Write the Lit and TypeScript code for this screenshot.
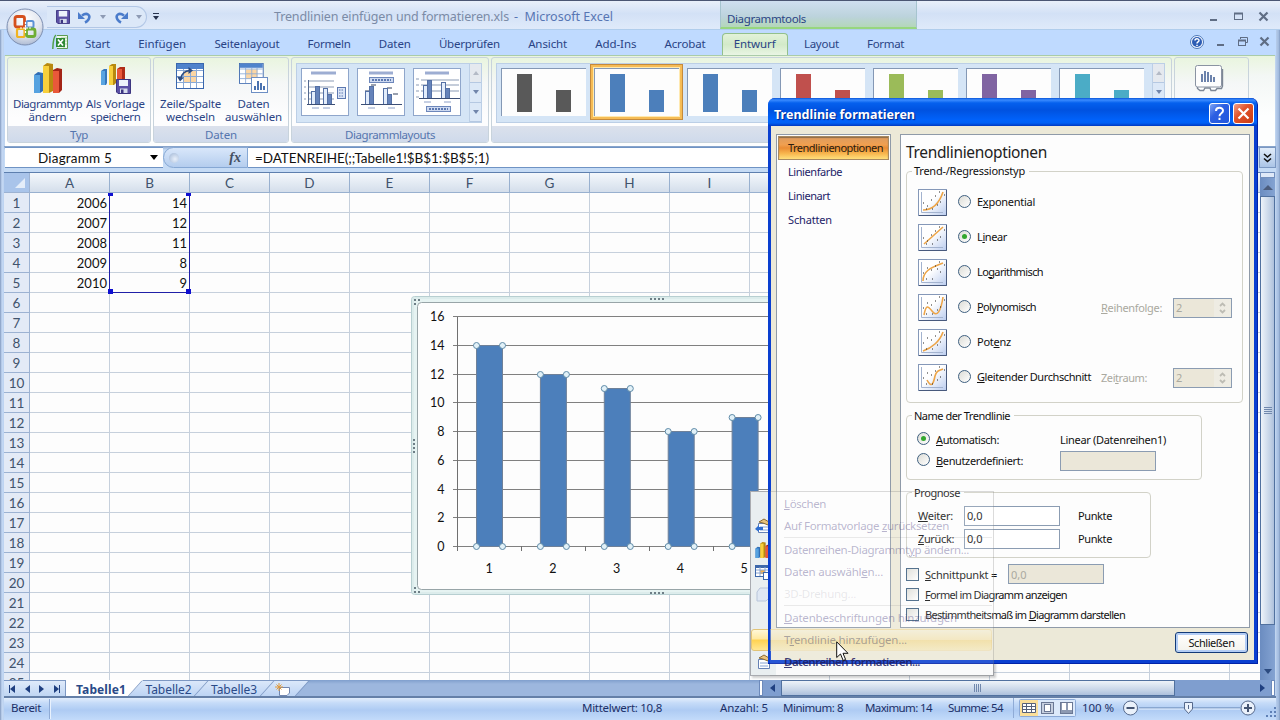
import { LitElement, html, css, svg, nothing } from "lit";
import { customElement, property } from "lit/decorators.js";
import { classMap } from "lit/directives/class-map.js";

/** One line of text tracked to a given width; "_" marks the accelerator letter. */
@customElement("fit-label")
class FitLabel extends LitElement {
  @property() text = "";
  @property({ type: Number }) w = 0;
  static styles = css`
    :host { display: inline-block; white-space: pre; flex: none; justify-self: start; }
    u { text-underline-offset: 1px; text-decoration-thickness: 1px; }
  `;
  firstUpdated() {
    if (!this.w) return;
    const natural = this.renderRoot.querySelector("span")!.getBoundingClientRect().width;
    const n = this.text.replace("_", "").length;
    this.style.letterSpacing = `${(this.w + 1 - natural) / n}px`;
  }
  render() {
    const i = this.text.indexOf("_");
    if (i < 0) return html`<span>${this.text}</span>`;
    return html`<span>${this.text.slice(0, i)}<u>${this.text[i + 1]}</u>${this.text.slice(i + 2)}</span>`;
  }
}

const fit = (text: string, w: number, cls = "") =>
  html`<fit-label class=${cls} .text=${text} .w=${w}></fit-label>`;

/* ---------- icons ---------- */
const barsIcon = (size: number) => html`<svg width=${size} height=${size} viewBox="0 0 30 30">
  <path d="M1 12 5 9 10 10V28L7 30H1Z" fill="#2f6db5"/><path d="M1 12H7V30H1Z" fill="#56a2e0"/>
  <path d="M10 3 14 0 20 1V28L16 30H10Z" fill="#b88a10"/><path d="M10 3H16V30H10Z" fill="#f7cf3c"/>
  <path d="M20 7 24 5 29 6V27L26 30H20Z" fill="#a32416"/><path d="M20 8H26V30H20Z" fill="#e9583a"/></svg>`;

const floppy = svg`<path d="M.5 .5H14.5V14.5H2L.5 13Z" fill="#5b50a5" stroke="#3c3580"/>
  <path d="M3 1H12V7H3Z" fill="#eef3fb"/><path d="M4 9.5H11.5V14H4Z" fill="#d6dcec"/><path d="M5 10.5H7.5V14H5Z" fill="#3c3580"/>`;

const templateIcon = html`<svg width="32" height="32" viewBox="0 0 32 32">
  <path d="M1 8 4 6H7V20L6 22H1Z" fill="#3577bd"/><path d="M1 8H5V22H1Z" fill="#59a5e2"/>
  <path d="M9 3 12 1H16V20L14 22H9Z" fill="#b88a10"/><path d="M9 3H13V22H9Z" fill="#f7cf3c"/>
  <path d="M17 6 20 4H25V22H17Z" fill="#b02c18"/><path d="M17 6H22V22H17Z" fill="#e9583a"/>
  <g transform="translate(16 16)">${floppy}</g></svg>`;

const tableSvg = svg`<rect x=".5" y=".5" width="27" height="25" fill="#fff" stroke="#3a67ae"/>
  <rect x="1" y="1" width="26" height="5" fill="#4f83cc"/><rect x="8" y="8" width="13" height="12" fill="#fbd6a4"/>
  <path d="M1 7.500H27M1 13.500H27M1 19.500H27M7.500 6V25M14.500 6V25M20.500 6V25" stroke="#8aaad6" fill="none"/>`;

const swapIcon = html`<svg width="30" height="28" viewBox="0 0 30 28">${tableSvg}
  <path d="M4.500 16C5.500 11 8 8 14 7.500" fill="none" stroke="#2c4b80" stroke-width="1.700"/>
  <path d="M1 13.500 4 18.500 8 14.500Z M12.500 4 17 7.500 12.500 11Z" fill="#2c4b80"/></svg>`;

const selectIcon = html`<svg width="30" height="31" viewBox="0 0 30 31"><g transform="scale(.88 .8)">${tableSvg}</g>
  <rect x="12.500" y="14.500" width="16" height="15" fill="#fff" stroke="#6d8fc4"/>
  <path d="M16 27V23M19 27V18M22 27V20M25 27V23" stroke="#4a72b0" stroke-width="2"/></svg>`;

const officeLogo = html`<svg class="orb" width="38" height="38" viewBox="0 0 38 38">
  <defs><radialGradient id="orb" cx=".5" cy=".3" r=".75"><stop offset="0" stop-color="#fff"/>
  <stop offset=".6" stop-color="#e1e5ee"/><stop offset="1" stop-color="#a5b4cf"/></radialGradient></defs>
  <circle cx="19" cy="19" r="18" fill="url(#orb)" stroke="#7d8fb2"/>
  <g fill="none" stroke-linejoin="round"><rect x="9" y="8.500" width="9.500" height="10.500" rx="2" stroke="#d5501d" stroke-width="2.800"/>
  <rect x="20.500" y="13" width="7" height="6.500" rx="1.500" stroke="#5c92d6" stroke-width="2"/>
  <rect x="11" y="21" width="7.500" height="8" rx="1.500" stroke="#f1b321" stroke-width="2.200"/>
  <rect x="20.500" y="21" width="8.500" height="7.500" rx="2" stroke="#6fae35" stroke-width="2.800"/></g>
  <path d="M14 20H26M19.500 14V26" stroke="#fff" stroke-width="1.200" stroke-dasharray="2 1"/></svg>`;

const undo = (flip: boolean) => html`<svg class=${flip ? "flip" : ""} width="14" height="14" viewBox="0 0 14 14">
  <path d="M4 5.500C9 2 13 5 10.500 9.500 9.500 11 8 12 7 12.500" fill="none" stroke="#4b7ccb" stroke-width="2.600"/>
  <path d="M0 2V9H7Z" fill="#4b7ccb"/></svg>`;

const tri = (cls = "") => html`<i class="tri ${cls}"></i>`;

const excelIcon = html`<svg width="16" height="16" viewBox="0 0 16 16">
  <path d="M5 1.500H15.500V14.500H5" fill="#eff8ec" stroke="#5d9a54"/><path d="M12 4V14M9 4H15M9 7H15M9 10H15" stroke="#a9cfa0" fill="none"/>
  <path d="M4 1C1 3 1 11 .8 15" stroke="#52a04a" fill="none" stroke-width="1.500"/>
  <rect x="4" y="4" width="9" height="9" fill="#2f8a34"/><path d="M6 5.500 11 11.500M11 5.500 6 11.500" stroke="#fff" stroke-width="1.700"/></svg>`;

const winBtn = (kind: string) => html`<svg width="11" height="11" viewBox="0 0 11 11" fill="none" stroke="#5f6d84">
  ${kind === "min" ? svg`<path d="M2 9H9" stroke-width="2"/>` : nothing}
  ${kind === "max" ? svg`<rect x="1.500" y="2.500" width="8" height="6"/><path d="M1 2.500H10" stroke-width="2"/>` : nothing}
  ${kind === "res" ? svg`<path d="M3.500 3V1.500H10.500V6.500H9M3 1.500H10"/><rect x="1.500" y="4.500" width="7" height="5"/><path d="M1 4.500H9" stroke-width="2"/>` : nothing}
  ${kind === "x" ? svg`<path d="M1.500 1.500 9.500 9.500M9.500 1.500 1.500 9.500" stroke-width="2.200"/>` : nothing}</svg>`;

const layoutThumb = (kind: number) => {
  const y = [36, 36, 30][kind];
  const x = [7, 5, 7][kind];
  return html`<svg class="lthumb" width="48" height="48" viewBox="0 0 48 48">
    <rect x=".5" y=".5" width="47" height="47" fill="#fff" stroke="#8fa6cb"/>
    <path d="M${kind === 0 ? 10 : 12} 5H${kind === 0 ? 35 : 36}" stroke="#9dadd2" stroke-width="3"/>
    ${kind === 0 ? svg`<path d="M7 13H33M7 19H33M7 25H33M7 31H33" stroke="#8b9bb5"/><path d="M7.500 12V37" stroke="#556a90"/>
      <path d="M3 13H5M3 19H5M3 25H5M3 31H5" stroke="#8b9bb5"/>
      <rect x="36.500" y="19.500" width="8" height="11" fill="#dbe5f6" stroke="#5c78b0"/><path d="M38 22H43M38 25H43M38 28H43" stroke="#5c78b0" stroke-dasharray="1.500 1"/>` : nothing}
    ${kind === 1 ? svg`<rect x="12.500" y="9.500" width="24" height="5" fill="#cdd9f0" stroke="#6d87bb"/><path d="M15 12H34" stroke="#5c78b0" stroke-width="2" stroke-dasharray="2 1"/>
      <path d="M8 23H13M14 17H19M30 20H35M36 26H41" stroke="#34435f"/>` : nothing}
    ${kind === 2 ? svg`<path d="M8 12H46M8 17H46M8 23H46" stroke="#8b9bb5"/><path d="M3 11H6M3 17H6M3 23H6M3 29H6" stroke="#8b9bb5"/>
      <rect x="13.500" y="38.500" width="24" height="5" fill="#cdd9f0" stroke="#6d87bb"/><path d="M16 41H35" stroke="#5c78b0" stroke-width="2" stroke-dasharray="2 1"/>` : nothing}
    <g stroke="#5470a5"><rect x=${x + 3.5} y=${y - 12.5} width="4" height="13" fill="#e3edfb"/>
    <rect x=${x + 7.5} y=${y - 17.5} width="4" height="18" fill="#6583ba"/>
    <rect x=${x + 15.5 + (kind ? 6 : 0)} y=${y - 15.5} width="4" height="16" fill="#e3edfb"/>
    <rect x=${x + 19.5 + (kind ? 6 : 0)} y=${y - 9.5} width="4" height="10" fill="#6583ba"/></g>
    <path d="M${x - 1} ${y + .5}H${x + (kind ? 40 : 27)}" stroke="#3c4f76"/>
    <path d="M11 ${y + 4}H18M${kind ? 31 : 22} ${y + 4}H${kind ? 38 : 29}" stroke="#8da0c8"/></svg>`;
};

const helpBall = html`<svg width="14" height="14" viewBox="0 0 14 14"><circle cx="7" cy="7" r="6.500" fill="#f4f8ff" stroke="#4d78b8"/>
  <circle cx="7" cy="7" r="5" fill="#2c5cb4"/><path d="M5 5.600C5 3.300 9 3.300 9 5.500 9 7 7 6.900 7 8.600M7 9.700V11" stroke="#fff" stroke-width="1.500" fill="none"/></svg>`;

const trendPaths = [
  "M5 21C14 21 21 15 25 3", "M6 20 25 3", "M5 22C5 13 11 9 25 4",
  "M6 21C8 10 10 12 14 17 19 24 23 17 25 3", "M5 22C14 19 22 12 25 3", "M9 16C14 26 16 17 17 12 19 6 21 7 25 5",
];
const trendIcon = (k: number) => html`<svg width="29" height="27" viewBox="0 0 29 27">
  <defs><linearGradient id="tg" x1="0" y1="0" x2="1" y2="1"><stop offset=".45" stop-color="#fff"/><stop offset="1" stop-color="#b9cbee"/></linearGradient></defs>
  <rect x=".5" y=".5" width="28" height="26" fill="url(#tg)" stroke="#8598b8"/><path d="M1 26.500H28.500V1" fill="none" stroke="#48597c"/>
  <path d="M3.500 3V23.500H25" fill="none" stroke="#a3b3cf"/><path d=${trendPaths[k]} fill="none" stroke="#eda548" stroke-width="1.600"/>
  <path d="M5 14h1M9 ${k < 2 ? 17 : 9}h1M13 11h1M14 20h1M19 ${k === 2 ? 10 : 16}h1M17 7h1M22 13h1M21 3h1M26 6h1M8 20h1" stroke="#222" stroke-width="1.200"/></svg>`;

const menuIcon = (k: string) => {
  if (k === "bars") return barsIcon(16);
  const sheet = svg`<path d="M3.500 5.500H14.500V14.500H3.500Z" fill="#fff" stroke="#6681b4"/><path d="M5 9H13M5 12H13" stroke="#86a2d3"/>
      <path d="M4 4 9 1 14 4 13 7 8 5Z" fill="#e7c27c" stroke="#8a6a32"/>`;
  return html`<svg width="16" height="16" viewBox="0 0 16 16">
    ${k === "reset" ? svg`${sheet}<path d="M0 11 4 7V9H8V12H4V14Z" fill="#2f6ed0"/>` : nothing}
    ${k === "format" ? sheet : nothing}
    ${k === "table" ? svg`<rect x=".5" y="1.500" width="14" height="11" fill="#fff" stroke="#3d68ab"/><path d="M0 3H15" stroke="#3d68ab" stroke-width="2"/>
      <path d="M5 6H10V10H5Z" fill="#f2b04e"/><path d="M1 6H14M1 9H14M5 3V12M10 3V12" stroke="#8aa5d0"/><rect x="8.500" y="8.500" width="7" height="7" fill="#fff" stroke="#3d68ab"/>` : nothing}
    ${k === "cube" ? svg`<path d="M2 6 5 2H14V12L11 15H2Z" fill="#dfe7f3" stroke="#b8c5da"/>` : nothing}</svg>`;
};

/* ---------- data ---------- */
const tabs: [string, number][] = [["Start", 24], ["Einfügen", 47], ["Seitenlayout", 64], ["Formeln", 42], ["Daten", 31],
  ["Überprüfen", 60], ["Ansicht", 38], ["Add-Ins", 40], ["Acrobat", 40], ["Entwurf", 41], ["Layout", 34], ["Format", 36]];
const cols = [..."ABCDEFGHIJKLMNO", ""];
const cells = [["2006", "14"], ["2007", "12"], ["2008", "11"], ["2009", "8"], ["2010", "9"]];
const styleColors = ["#595959", "#4c7fbb", "#4c7fbb", "#c0504d", "#9bbb59", "#8064a2", "#4bacc6"];
const trends: [string, number][] = [["E_xponential", 57], ["L_inear", 29], ["Lo_garithmisch", 65], ["_Polynomisch", 58], ["Pot_enz", 33], ["_Gleitender Durchschnitt", 113]];
const menu: ([string, number, string] | null)[] = [["_Löschen", 41, ""], ["Auf Formatvorlage _zurücksetzen", 164, "reset"], null,
  ["Datenreihen-Diagrammt_yp ändern...", 184, "bars"], ["Daten auswähl_en...", 98, "table"], ["3D-Drehung...", 71, "cube"], null,
  ["_Datenbeschriftungen hinzufügen", 172, ""], ["T_rendlinie hinzufügen...", 122, ""], ["_Datenreihen formatieren...", 135, "format"]];

@customElement("excel-chart")
class ExcelChart extends LitElement {
  static styles = css`
    :host { display: block; }
    svg { display: block; }
    text { font: 12.500px Lato, "Liberation Sans", sans-serif; fill: #111; }
    .v { text-anchor: end; } .c { text-anchor: middle; }
  `;
  render() {
    const vals = [14, 12, 11, 8, 9];
    const y = (v: number) => Math.round(546 - v * 14.36) + 0.5;
    const bx = (i: number) => 476.5 + i * 63.9;
    const dots = (x: number, yy: number, vert = false) => [0, 1, 2, 3].map((i) =>
      svg`<rect x=${vert ? x : x + i * 4} y=${vert ? yy + i * 4 : yy} width="2" height="2" fill="#6d7e86"/>`);
    return html`<svg width="492" height="300" viewBox="411 296 492 300">
      <rect x="411.500" y="296.500" width="491" height="298" rx="3" fill="#e6f3f2" stroke="#b7cfd1"/>
      <rect x="413" y="298" width="488" height="295" rx="2" fill="none" stroke="#d2e5e5"/>
      <rect x="417.500" y="302.500" width="479" height="287" rx="4" fill="#fdfdfd" stroke="#98a5a8"/>
      ${dots(650, 298)}${dots(650, 592)}${dots(413, 439, true)}
      <path d="M414 300h2m2 0h2M414 304h2M414 588h2M414 592h2m2 0h2" stroke="#6d7e86" stroke-width="2"/>
      ${[0, 2, 4, 6, 8, 10, 12, 14, 16].map((v) => svg`<path d="M453 ${y(v)}H890" stroke="#808080"/>
        <text class="v" x="444.500" y=${y(v) + 4.5}>${v}</text>`)}
      <path d="M457.500 317V551${[1, 2, 3, 4, 5].map((i) => `M${Math.round(457 + i * 63.9) + 0.5} 546V551`).join("")}" stroke="#707070"/>
      ${vals.map((v, i) => svg`<rect x=${bx(i)} y=${y(v)} width="26" height=${y(0) - y(v)} fill="#4c7fbb" stroke="#6f8199"/>
        ${[bx(i), bx(i) + 26].map((cx) => [y(v), y(0)].map((cy) => svg`<circle cx=${cx} cy=${cy} r="3" fill="#e2f1f8" stroke="#5f8ba8"/>`))}
        <text class="c" x=${489 + i * 63.8} y="572.500">${i + 1}</text>`)}
    </svg>`;
  }
}

@customElement("trend-dialog")
class TrendDialog extends LitElement {
  static styles = css`
    :host { display: flex; flex-direction: column; box-sizing: border-box; width: 490px; height: 566px; background: #0a3fd0;
      border-radius: 7px 7px 0 0; overflow: hidden; padding: 0 3px 3px; border: 0 solid #0022a8; border-width: 0 1px 1px 0;
      font: 11px "Noto Sans", "Open Sans", sans-serif; color: #111; }
    .bar { height: 28px; margin: 0 -3px; padding: 0 3px 0 6px; display: flex; align-items: center; gap: 3px; flex: none;
      background: linear-gradient(#0a55d8 0, #3a8bff 2px, #0560ee 5px, #0052e0 12px, #0062fb 22px, #0060f4 25px, #0038c0 28px);
      color: #fff; font: bold 12.500px "Noto Sans", sans-serif; text-shadow: 1px 1px 1px #00248a; }
    .bar fit-label { padding-top: 5px; }
    .grow { flex: 1; }
    .cap { width: 21px; height: 21px; box-sizing: border-box; border: 1px solid #fff; border-radius: 3px; display: flex; align-items: center; justify-content: center; margin-top: 2px; }
    .q { background: linear-gradient(135deg, #7fa5f5, #2c5fe2 40%, #2257dd); }
    .close { background: linear-gradient(135deg, #f0a08a, #e2542c 40%, #c93b12); }
    .body { flex: 1; min-height: 0; background: #ece9d8; display: grid; grid-template-columns: 115px 350px; grid-template-rows: 494px 1fr; column-gap: 9px; padding: 8px 0 0 5px; }
    .panel { background: #fdfdfd; border: 1px solid #8f9aa8; box-sizing: border-box; }
    .nav { padding: 1px; display: flex; flex-direction: column; color: #1c2368; }
    .nav div { height: 24px; box-sizing: border-box; padding: 0 0 2px 10px; display: flex; align-items: center; }
    .nav .on { border: 1px solid #a78a62; padding-left: 9px; color: #2a1c10; box-shadow: inset 0 1px 1px #8d6c49;
      background: linear-gradient(#dc9c60, #f0a050 35%, #ea8c34 50%, #f8b64e 75%, #ffdf7c); }
    .opts { padding: 7px 5px 6px; display: flex; flex-direction: column; }
    .h { font-size: 15.500px; line-height: 20px; color: #222; height: 21px; }
    .grp { border: 1px solid #d2d2c8; border-radius: 4px; box-sizing: border-box; display: flex; flex-direction: column; flex: none; }
    .leg { align-self: flex-start; background: #fdfdfd; padding: 0 4px 0 2px; margin: -9px 0 0 5px; line-height: 15px; height: 16px; }
    .g1 { width: 337px; height: 232px; margin-top: 9px; }
    .g2 { width: 296px; height: 65px; margin-top: 12px; }
    .g3 { width: 245px; height: 66px; margin-top: 12px; }
    .g2 .leg, .g3 .leg { padding-top: 1px; margin-bottom: -1px; }
    .row { display: flex; align-items: center; }
    .g1 .row { height: 35px; padding-left: 11px; }
    .g1 .rows { padding-top: 6px; }
    .g1 .radio { margin: 0 6px 0 11px; }
    .radio { width: 13px; height: 13px; box-sizing: border-box; border-radius: 50%; border: 1px solid #3f6080; background: linear-gradient(135deg, #dcdcd6, #fff); display: flex; align-items: center; justify-content: center; flex: none; position: relative; top: -1px; }
    .radio.on::after { content: ""; width: 5px; height: 5px; border-radius: 50%; background: #32a72e; }
    .lab { line-height: 16px; margin-bottom: 2px; }
    .dis { color: #aaa99f; }
    .right { margin-left: auto; width: 141px; display: flex; justify-content: space-between; align-items: center; padding-right: 10px; box-sizing: border-box; height: 20px; }
    .box { border: 1px solid #8b9cb2; background: #fff; box-sizing: border-box; height: 20px; width: 96px; padding-left: 2px; display: flex; align-items: center; flex: none; }
    .off { background: #ebe7d9; color: #aaa99f; }
    .spin { width: 59px; justify-content: space-between; }
    .arr { width: 17px; height: 18px; background: #eeece3; display: flex; align-items: center; justify-content: center; }
    .c2 { display: grid; grid-template-columns: 143px 1fr; height: 21px; align-items: center; padding-left: 10px; }
    .c2 .row { gap: 6px; }
    .g2 .in { padding-top: 6px; }
    .c3 { display: grid; grid-template-columns: 46px 114px 1fr; height: 23px; align-items: center; padding-left: 11px; }
    .g3 .in { padding-top: 4px; }
    .chk { display: flex; align-items: center; gap: 6px; height: 20px; }
    .chk b { width: 13px; height: 13px; box-sizing: border-box; border: 1px solid #3f6080; background: linear-gradient(135deg, #dcdcd6, #fff); }
    .chk .box { margin-left: 5px; }
    .chks { padding-top: 6px; display: flex; flex-direction: column; }
    .foot { grid-column: 1 / 3; display: flex; justify-content: flex-end; padding: 4px 2px 0 0; }
    .btn { width: 73px; height: 21px; box-sizing: border-box; border: 1px solid #123a78; border-radius: 3px; background: linear-gradient(#fff, #f3f2ec); box-shadow: inset 0 0 0 2px #b3cdf5; display: flex; align-items: center; justify-content: center; }
  `;
  render() {
    const spin = html`<span class="box off spin">2<span class="arr"><svg width="7" height="12" viewBox="0 0 7 12"><path d="M1 4 3.500 1.500 6 4M1 8 3.500 10.500 6 8" fill="none" stroke="#bdbcb4" stroke-width="1.800"/></svg></span></span>`;
    return html`<div class="bar">${fit("Trendlinie formatieren", 140)}<span class="grow"></span>
        <span class="cap q"><svg width="15" height="15" viewBox="0 0 15 15"><path d="M4 5C4 .8 11 .8 11 4.800 11 7.500 7.500 7 7.500 10.200M7.500 11.800V14" stroke="#fff" stroke-width="2" fill="none"/></svg></span>
        <span class="cap close"><svg width="13" height="13" viewBox="0 0 13 13"><path d="M1.500 1.500 11.500 11.500M11.500 1.500 1.500 11.500" stroke="#fff" stroke-width="2.200"/></svg></span>
      </div>
      <div class="body">
        <div class="panel nav"><div class="on">${fit("Trendlinienoptionen", 94)}</div><div>${fit("Linienfarbe", 53)}</div><div>${fit("Linienart", 41)}</div><div>${fit("Schatten", 43)}</div></div>
        <div class="panel opts">
          <div class="h">${fit("Trendlinienoptionen", 140)}</div>
          <div class="grp g1"><span class="leg">${fit("Trend-/Regressionstyp", 110)}</span>
            <div class="rows">${trends.map(([t, w], i) => html`<div class="row">${trendIcon(i)}
              <span class=${classMap({ radio: true, on: i === 1 })}></span>${fit(t, w, "lab")}
              ${i === 3 ? html`<span class="right dis">${fit("_Reihenfolge:", 60)}${spin}</span>` : nothing}
              ${i === 5 ? html`<span class="right dis">${fit("Zei_traum:", 45)}${spin}</span>` : nothing}</div>`)}</div></div>
          <div class="grp g2"><span class="leg">${fit("Name der Trendlinie", 95)}</span><div class="in">
            <div class="c2"><span class="row"><span class="radio on"></span>${fit("_Automatisch:", 62)}</span><span>${fit("Linear (Datenreihen1)", 105)}</span></div>
            <div class="c2"><span class="row"><span class="radio"></span>${fit("_Benutzerdefiniert:", 86)}</span><span class="box off"></span></div></div></div>
          <div class="grp g3"><span class="leg">${fit("Prognose", 45)}</span><div class="in">
            <div class="c3">${fit("_Weiter:", 34)}<span class="box">0,0</span>${fit("Punkte", 33)}</div>
            <div class="c3">${fit("_Zurück:", 35)}<span class="box">0,0</span>${fit("Punkte", 33)}</div></div></div>
          <div class="chks"><div class="chk"><b></b>${fit("_Schnittpunkt =", 71)}<span class="box off">0,0</span></div>
            <div class="chk"><b></b>${fit("_Formel im Diagramm anzeigen", 141)}</div>
            <div class="chk"><b></b>${fit("Bestimmtheitsmaß im _Diagramm darstellen", 199)}</div></div>
        </div>
        <div class="foot"><div class="btn">${fit("Schließen", 45)}</div></div>
      </div>`;
  }
}

@customElement("context-menu")
class ContextMenu extends LitElement {
  /** The fading copy over the dialog carries the captions, the solid one the icons. */
  @property({ type: Boolean, reflect: true }) ghost = false;
  static styles = css`
    :host { display: block; box-sizing: border-box; width: 244px; height: 185px; border: 1px solid #a9abb0; padding: 1px 1px 1px 0; background: linear-gradient(90deg, #e9eef0 25px, #fafafa 25px);
      font: 11.500px "Noto Sans", "Open Sans", sans-serif; color: rgba(60, 50, 120, .36); box-shadow: 2px 2px 2px rgba(0,0,0,.18); }
    :host([ghost]) { background: rgba(255,255,255,.12); border-color: rgba(90,90,90,.22); box-shadow: none; }
    .item { height: 22px; display: flex; align-items: center; box-sizing: border-box; border: 1px solid transparent; }
    .faint { color: rgba(110, 110, 130, .16); }
    .ic { width: 16px; height: 16px; margin: 0 13px 0 3px; }
    .ic svg { display: block; }
    .sep { height: 1px; margin: 0 0 1px 33px; background: rgba(110,110,110,.14); }
    .hot { background: linear-gradient(#fff8d8, #ffe9a0 45%, #ffd250 50%, #ffe793); border-color: #e2c477; border-radius: 3px; }
    :host([ghost]) .hot { background: linear-gradient(rgba(255,248,216,.3), rgba(255,225,140,.3) 48%, rgba(250,200,60,.3) 50%, rgba(255,231,147,.3)); border-color: rgba(226,196,119,.25); color: rgba(50,50,90,.4); }
    .last { font-weight: 600; color: rgba(30, 28, 95, .85); }
    fit-label { line-height: 18px; padding-bottom: 1px; }
  `;
  render() {
    return menu.map((m, i) => m ? html`<div class=${classMap({ item: true, faint: i === 5, hot: i === 8, last: i === 9 })}>
      <span class="ic">${m[2] && !this.ghost ? menuIcon(m[2]) : nothing}</span>${this.ghost ? fit(m[0], m[1]) : nothing}</div>` : html`<div class="sep"></div>`);
  }
}

@customElement("app-root")
class AppRoot extends LitElement {
  static styles = css`
    :host { display: flex; flex-direction: column; position: relative; width: 1280px; height: 720px; overflow: hidden; box-sizing: border-box;
      background: #bfd4ef; font: 11.500px "Noto Sans", "Open Sans", sans-serif; color: #2a4485; }
    svg { display: block; flex: none; }
    .grow { flex: 1; }
    .flip { transform: scaleX(-1); }
    .tri { width: 0; height: 0; border: 3px solid transparent; border-top: 4px solid #7185aa; border-bottom: 0; flex: none; }
    .tri.dark { border-top-color: #26324e; } .tri.pale { border-top-color: #8e9bb4; }
    .tri.up { border-top: 0; border-bottom: 4px solid #b4bac6; }
    .sq .tri.up { border-width: 0 5px 5px; border-bottom-color: #4b5c7d; }
    .sq .tri.dark { border-width: 5px 4px 0; border-top-color: #2c4b80; }
    .tri.big { border-width: 5px 4.500px 0; border-top-color: #000; }
    .tri.left { border: 4px solid transparent; border-right: 5px solid #1f3f80; border-left: 0; }
    .tri.rt { border: 4px solid transparent; border-left: 5px solid #1f3f80; border-right: 0; }

    .title { height: 30px; flex: none; box-sizing: border-box; border-top: 1px solid #4b5673; border-bottom: 1px solid #b0cdec; display: flex; align-items: stretch;
      background: linear-gradient(#e9f0fa, #d3e1f6 45%, #dfeafa); padding-left: 47px; }
    .qat { width: 100px; margin: 5px 0 1px; padding: 0 0 0 9px; box-sizing: border-box; display: flex; align-items: center; gap: 8px; border: 1px solid #b2c7e6; border-left: 0; border-radius: 0 12px 12px 0; background: #dce8f8; }
    .more { margin: 12px 0 0 6px; display: flex; flex-direction: column; align-items: center; gap: 2px; }
    .more::before { content: ""; width: 6px; height: 1px; background: #26324e; }
    .cap { width: 234px; margin-left: 115px; align-self: center; font-size: 12.500px; color: #7b8ba6; padding-top: 2px; }
    .app { margin-left: 6px; align-self: center; font-size: 12.500px; color: #5775b3; width: 206px; padding-top: 2px; }
    .ctx { width: 197px; box-sizing: border-box; border: 1px solid #a6c4cf; border-width: 0 1px 0; border-bottom: 2px solid #97d67e; padding: 10px 0 0 6px; background: linear-gradient(#cfdff0, #bcd3dc 60%, #b4d7b9); }
    .wins { display: flex; align-items: center; gap: 14px; margin-left: auto; padding: 2px 11px 0 0; }
    .tabs { height: 25px; flex: none; display: flex; align-items: center; padding: 0 10px 0 52px; box-sizing: border-box; background: #bfdaff; }
    .tabrow { display: flex; gap: 28.200px; margin-left: 17px; align-items: center; align-self: stretch; }
    .tab { display: flex; align-items: center; height: 24px; padding-top: 3px; box-sizing: border-box; }
    .tab fit-label { margin-top: -2px; }
    .tab.on { margin: 3px -12px 0; padding: 0 11px; height: 22px; border: 1px solid #93c08c; border-bottom: 0; border-radius: 4px 4px 0 0; background: linear-gradient(#e2f2d9, #d3eac9 50%, #e9f5e4); }
    .tabs > svg { margin-top: -2px; }
    .tabs .wins { padding: 0; gap: 11px; margin-top: -2px; }

    .ribbon { height: 91px; flex: none; box-sizing: border-box; margin: 0 5px 0 5px; border-top: 1px solid #aacba9; display: flex; gap: 2px; padding: 1px 2px 2px; background: linear-gradient(#e9f5de, #f3f7f5 20px, #fdfefe 60px); }
    .group { border: 1px solid #c8d3dc; border-radius: 3px; box-sizing: border-box; height: 86px; display: flex; flex-direction: column; background: linear-gradient(#e9f5df, #f5f7f7 25px, #fdfdfe 60px); flex: none; overflow: hidden; }
    .gmain { flex: 1; display: flex; min-height: 0; }
    .glab { height: 16px; background: linear-gradient(#dbe1ec, #cfdaeb); display: flex; align-items: center; justify-content: center; color: #5575ae; }
    .cmd { display: flex; flex-direction: column; align-items: center; line-height: 13px; padding-top: 5px; }
    .cmd .art { height: 34px; display: flex; align-items: flex-start; }
    .w1 { width: 144px; } .w2 { width: 136px; } .w3 { width: 198px; } .w4 { width: 681px; } .w5 { width: 75px; }
    .w1 .gmain { gap: 4px; padding-left: 5px; }
    .w2 .gmain { gap: 4px; padding-left: 6px; }
    .gal { margin: 5px 0 0 4px; height: 60px; box-sizing: border-box; border: 1px solid #bccfe6; background: #d5e5f6; display: flex; }
    .g3 { width: 186px; padding: 4px 0 0 4px; gap: 8px; }
    .g4 { width: 669px; padding: 4px 0 0 4px; gap: 8px; }
    .scr { width: 13px; margin: -4px 0 0 auto; height: 58px; display: flex; flex-direction: column; border-left: 1px solid #bccfe6; box-sizing: border-box; }
    .scr span { flex: 1; display: flex; align-items: center; justify-content: center; border-bottom: 1px solid #b5c8e2; background: #dce8f7; }
    .scr span:first-child { background: #e5e9ef; }
    .st { width: 85px; height: 48px; box-sizing: border-box; background: #fdfdfd; border: 1px solid #8498b5; border-width: 1px 0 0 1px; display: flex; align-items: flex-end; padding: 0 15px 4px; justify-content: space-between; flex: none; }
    .st i { width: 15px; height: 38px; } .st i + i { height: 22px; }
    .st.sel { outline: 1px solid #ffe9b0; box-shadow: 0 0 0 3px #f6bc55, 0 0 0 4px #c58a3c; }
    .ort { justify-content: center; padding: 7px 5px 0 0; }

    .fbar { height: 26px; flex: none; display: flex; padding: 1px 5px 4px; background: linear-gradient(#7f9cc4, #a7c0e2 2px, #c5dbf5 4px, #c5dbf5); box-sizing: border-box; color: #111; font-family: Lato, "Liberation Sans", sans-serif; }
    .name { width: 158px; background: #fff; border: solid #6f93c4; border-width: 1px 0; box-sizing: border-box; display: flex; align-items: center; padding: 0 5px 0 33px; justify-content: space-between; font-size: 13.500px; }
    .fx { width: 85px; box-sizing: border-box; border: 1px solid #86a8d4; border-radius: 11px 0 0 11px; background: linear-gradient(#d9e7fa, #b4cdee); display: flex; align-items: center; justify-content: space-between; padding: 0 6px 0 5px; font: italic bold 14px "Liberation Serif", serif; color: #444f62; }
    .fx::before { content: ""; width: 10px; height: 10px; border-radius: 50%; background: radial-gradient(circle at 60% 60%, #e8f0fb, #9fb5d4); }
    .form { flex: 1; background: #fff; border: solid #6f93c4; border-width: 1px 0; display: flex; align-items: center; padding-left: 7px; font-size: 13.500px; }
    .exp { width: 15px; border: 1px solid #7b98c2; background: linear-gradient(#e2edfa, #aac4e6); display: flex; align-items: center; justify-content: center; margin: 0 -1px 0 2px; }

    .main { height: 508px; flex: none; display: flex; padding: 0 5px 0 4px; }
    .sheet { width: 1256px; overflow: hidden; background: #fff; border-top: 1px solid #5d7fae; box-sizing: border-box; font: 13px Lato, "Liberation Sans", sans-serif; color: #111; }
    .r { display: flex; height: 20px; width: 1306px; }
    .r > div { width: 80px; height: 20px; box-sizing: border-box; border-right: 1px solid #c6d0dc; border-bottom: 1px solid #c6d0dc; flex: none; line-height: 20px; text-align: right; padding-right: 2px; background: #fdfdfd; }
    .r > .rh { width: 26px; background: #e3eaf6; border-color: #9cb2d2; color: #41536d; text-align: center; padding: 0; font-size: 13.500px; }
    .head > div { background: linear-gradient(#f4f8fc, #d4deeb); border-color: #98b0cf; text-align: center; padding: 0; line-height: 21px; color: #41536d; font-size: 13.500px; }
    .head > .rh { background: #a9c4ea; display: flex; justify-content: flex-end; padding: 5px 4px; }
    .corner { width: 0; height: 0; border: 5px solid #e4edf9; border-left-color: transparent; border-top-color: transparent; }
    .vs { width: 15px; display: flex; flex-direction: column; background: linear-gradient(90deg, #6b8cc0, #84a3d2); }
    .split { height: 6px; background: #dfe9f8; border: 1px solid #7390be; box-sizing: border-box; }
    .sq { height: 18px; display: flex; align-items: center; justify-content: center; flex: none; }
    .thumb { height: 429px; border: 1px solid #51719f; box-sizing: border-box; background: linear-gradient(90deg, #eef3f9, #c3d2e6 70%, #adc0dc); display: flex; align-items: center; justify-content: center; }

    .sheets { height: 18px; flex: none; display: flex; padding: 0 5px 0 4px; box-sizing: border-box; border-bottom: 2px solid #6580a8; background: #bfd4ef; }
    .strip { width: 755px; display: flex; background: linear-gradient(#809fcd, #9db7de 4px, #9db7de); overflow: hidden; font-size: 12px; }
    .navs { width: 62px; display: flex; align-items: center; justify-content: space-around; background: linear-gradient(#dfeafa, #c0d6f3); flex: none; position: relative; z-index: 5; border-right: 1px solid #7d98c3; border-top: 1px solid #7d98c3; box-sizing: border-box; }
    .navs span { display: flex; align-items: center; }
    .bl { border-left: 1px solid #1f3f80; } .br { border-right: 1px solid #1f3f80; }
    .sh { position: relative; display: flex; align-items: center; justify-content: center; width: 66px; color: #2a4a88; flex: none; padding-top: 2px; box-sizing: border-box; }
    .sh::before { content: ""; position: absolute; inset: 0 -8px 0 -8px; transform: skewX(-42deg); background: linear-gradient(#dbe8fa, #bdd4f4); border-right: 1px solid #7d98c3; border-top: 1px solid #7d98c3; z-index: 0; }
    .sh > * { position: relative; z-index: 1; }
    .sh.act { z-index: 4; width: 70px; font-weight: bold; } .sh.act::before { background: #fff; border-top-color: #fff; left: -20px; right: 0; }
    .s2 { z-index: 3; padding-right: 1px; } .s3 { z-index: 2; padding-right: 2px; }
    .s2::before, .s3::before { right: 0; }
    .s4 { width: 36px; z-index: 1; padding-right: 6px; } .s4::before { right: 1px; }
    .hsplit { width: 4px; background: #fff; border: 1px solid #6d8abb; box-sizing: border-box; }
    .hs { flex: 1; display: flex; background: #7f9ecf; align-items: stretch; }
    .hs .sq { width: 18px; height: auto; }
    .ht { width: 394px; box-sizing: border-box; border: 1px solid #51719f; background: linear-gradient(#eef3f9, #c3d2e6 70%, #adc0dc); display: flex; align-items: center; justify-content: center; }

    .status { height: 22px; flex: none; display: flex; align-items: center; padding-left: 11px; box-sizing: border-box; background: linear-gradient(#e2edfc, #c5dbf8 5px, #aecbf3 12px, #c3dbfa); color: #1c3068; font-size: 11.500px; }
    .status > fit-label { margin-top: -3px; }
    .status > .bar1 { width: 1px; height: 20px; background: #8fabd6; border-right: 1px solid #e8f1fd; }
    .m0 { margin-right: 8px; } .m1 { margin-left: 531px; } .m2 { margin-left: 58px; } .m3 { margin-left: 15px; } .m4 { margin-left: 22px; } .m5 { margin-left: 16px; }
    .zoom { display: flex; align-items: center; margin: -3px 0 0 auto; }
    .zoom fit-label { margin-right: 2px; }
    .over { position: absolute; }
    .chart { left: 411px; top: 296px; } .dlg { left: 768px; top: 98px; } .menu { left: 750px; top: 491px; }
    .ghost { clip-path: inset(0 0 0 20px); }
    .cursor { left: 836px; top: 641px; }
    .orbat { left: 6px; top: 8px; }
    .range { left: 109px; top: 193px; width: 81px; height: 100px; box-sizing: border-box; border: 1px solid #2020a8; border-top: 0; }
    .range i { position: absolute; width: 5px; height: 5px; background: #0f0fd0; }
    .range i:nth-child(1) { left: -2px; top: 0; height: 3px; } .range i:nth-child(2) { right: -2px; top: 0; height: 3px; }
    .range i:nth-child(3) { left: -2px; bottom: -2px; } .range i:nth-child(4) { right: -2px; bottom: -2px; }
    .edge { right: 0; top: 30px; bottom: 0; width: 4px; background: linear-gradient(90deg, #b7cdec, #9fb8dc 3px, #7d96bd); }
    .ledge { left: 0; top: 30px; bottom: 0; width: 4px; background: linear-gradient(90deg, #8299bf, #c5d9f4 2px, #bcd2f0); }
  `;
  cmd(icon: unknown, a: [string, number], b: [string, number]) {
    return html`<div class="cmd"><div class="art">${icon}</div>${fit(...a)}${fit(...b)}</div>`;
  }
  render() {
    const scroller = html`<div class="scr"><span>${tri("up")}</span><span>${tri()}</span><span>${tri()}</span></div>`;
    return html`
      <div class="title">
        <div class="qat"><svg width="14" height="14" viewBox="0 0 15 15">${floppy}</svg>${undo(false)}${tri("pale")}${undo(true)}${tri("pale")}</div>
        <div class="more">${tri("dark")}</div>
        <div class="cap">${fit("Trendlinien einfügen und formatieren.xls", 234)}</div>
        <div class="app">${fit("-  Microsoft Excel", 98)}</div>
        <div class="ctx">${fit("Diagrammtools", 78)}</div>
        <div class="wins">${winBtn("min")}${winBtn("max")}${winBtn("x")}</div>
      </div>
      <div class="tabs">${excelIcon}
        <div class="tabrow">${tabs.map(([t, w]) => html`<div class=${classMap({ tab: true, on: t === "Entwurf" })}>${fit(t, w)}</div>`)}</div>
        <div class="wins">${helpBall}${winBtn("min")}${winBtn("res")}${winBtn("x")}</div>
      </div>
      <div class="ribbon">
        <div class="group w1"><div class="gmain">${this.cmd(barsIcon(30), ["Diagrammtyp", 68], ["ändern", 37])}${this.cmd(templateIcon, ["Als Vorlage", 58], ["speichern", 49])}</div>
          <div class="glab">${fit("Typ", 17)}</div></div>
        <div class="group w2"><div class="gmain">${this.cmd(swapIcon, ["Zeile/Spalte", 60], ["wechseln", 48])}${this.cmd(selectIcon, ["Daten", 31], ["auswählen", 56])}</div>
          <div class="glab">${fit("Daten", 31)}</div></div>
        <div class="group w3"><div class="gmain"><div class="gal g3">${[0, 1, 2].map(layoutThumb)}${scroller}</div></div>
          <div class="glab">${fit("Diagrammlayouts", 89)}</div></div>
        <div class="group w4"><div class="gmain"><div class="gal g4">${styleColors.map((c, i) =>
          html`<div class=${classMap({ st: true, sel: i === 1 })}><i style="background:${c}"></i><i style="background:${c}"></i></div>`)}${scroller}</div></div>
          <div class="glab"></div></div>
        <div class="group w5"><div class="gmain ort"><svg width="30" height="27" viewBox="0 0 30 27">
          <path d="M3.500 21V23.500L6 25.500H9.500L11 23H16L17 25.500H21.500L23 23.500H27.500L28.500 21V4" fill="#fff" stroke="#7d8694" stroke-width="1.400"/><rect x="1.500" y=".5" width="26" height="21.500" rx="2" fill="#fdfdfd" stroke="#8a93a2"/>
          <path d="M8 17V9M11 17V6M14 17V7M17 17V10M20 17V12" stroke="#6c82ab" stroke-width="2"/></svg></div><div class="glab"></div></div>
      </div>
      <div class="fbar">
        <div class="name">${fit("Diagramm 5", 73)}${tri("big")}</div>
        <div class="fx"><span>fx</span></div>
        <div class="form">${fit("=DATENREIHE(;;Tabelle1!$B$1:$B$5;1)", 233)}</div>
        <div class="exp"><svg width="9" height="10" viewBox="0 0 9 10"><path d="M1 1 4.500 4 8 1M1 5.500 4.500 8.500 8 5.500" fill="none" stroke="#111" stroke-width="1.600"/></svg></div>
      </div>
      <div class="main">
        <div class="sheet">
          <div class="r head"><div class="rh"><i class="corner"></i></div>${cols.map((c) => html`<div>${c}</div>`)}</div>
          ${Array.from({ length: 25 }, (_, r) => html`<div class="r"><div class="rh">${r + 1}</div>${cols.map((_c, c) => html`<div>${cells[r]?.[c] ?? ""}</div>`)}</div>`)}
        </div>
        <div class="vs"><div class="split"></div><div class="sq">${tri("up")}</div>
          <div class="thumb"><svg width="8" height="8" viewBox="0 0 8 8"><path d="M0 .5H8M0 2.500H8M0 4.500H8M0 6.500H8" stroke="#7188ad"/></svg></div>
          <div class="grow"></div><div class="sq">${tri("dark")}</div></div>
      </div>
      <div class="sheets">
        <div class="strip">
          <div class="navs"><span class="bl">${tri("left")}</span><span>${tri("left")}</span><span>${tri("rt")}</span><span class="br">${tri("rt")}</span></div>
          <div class="sh act">${fit("Tabelle1", 49)}</div><div class="sh s2">${fit("Tabelle2", 45)}</div><div class="sh s3">${fit("Tabelle3", 45)}</div>
          <div class="sh s4"><svg width="16" height="13" viewBox="0 0 16 13"><path d="M4.500 4.500H14.500V10L12 12.500H4.500Z" fill="#fff" stroke="#7186b0"/><path d="M4 0V8M0 4H8M1.500 1.500 6.500 6.500M6.500 1.500 1.500 6.500" stroke="#e09a3c"/></svg></div>
        </div>
        <div class="hsplit"></div>
        <div class="hs"><div class="sq">${tri("left")}</div>
          <div class="ht"><svg width="8" height="8" viewBox="0 0 8 8"><path d="M.5 0V8M2.500 0V8M4.500 0V8M6.500 0V8" stroke="#7188ad"/></svg></div>
          <div class="grow"></div><div class="sq">${tri("rt")}</div><div class="hsplit"></div></div>
      </div>
      <div class="status">
        ${fit("Bereit", 29, "m0")}<span class="bar1"></span>
        ${fit("Mittelwert: 10,8", 79, "m1")}${fit("Anzahl: 5", 47, "m2")}${fit("Minimum: 8", 59, "m3")}${fit("Maximum: 14", 66, "m4")}${fit("Summe: 54", 54, "m5")}
        <div class="zoom">
          <svg width="72" height="20" viewBox="0 0 72 20"><path d="M3.500 0V20" stroke="#8fabd6"/><rect x="9.500" y="1.500" width="56" height="17" rx="1" fill="#dce9fa" stroke="#8ba9d6"/>
            <rect x="10" y="2" width="18" height="16" fill="#fbdf9a"/><path d="M12.500 5.500H25.500V14.500H12.500ZM12.500 8.500H25.500M12.500 11.500H25.500M16.500 5V15M21.500 5V15" fill="#fff" stroke="#56617a"/>
            <rect x="31.500" y="4.500" width="12" height="11" fill="#c6cfdf" stroke="#6b7894"/><rect x="34.500" y="6.500" width="6" height="7" fill="#fff" stroke="#6b7894"/>
            <rect x="50.500" y="4.500" width="12" height="11" fill="#8d99b1" stroke="#6b7894"/><path d="M52 5H56V12H52ZM58 5H62V12H58Z" fill="#fff"/></svg>
          ${fit("100 %", 31)}
          <svg width="164" height="20" viewBox="1116 0 164 20"><path d="M1139 10H1240" stroke="#5d7cad"/><path d="M1139 11H1240" stroke="#e6f0fd"/>
            <g fill="#eaf1fb" stroke="#56698c"><circle cx="1130.500" cy="10" r="7"/><circle cx="1248" cy="10" r="7"/><path d="M1184.500 4.500H1192.500V11L1188.500 15.500 1184.500 11Z"/></g>
            <path d="M1126.500 10H1134.500M1244 10H1252M1248 6V14" stroke="#445472" stroke-width="2"/><path d="M1188.500 7V11" stroke="#56698c"/>
            <path d="M1274 10h2M1270 14h2m2 0h2M1266 18h2m2 0h2m2 0h2" stroke="#5f80b6" stroke-width="2"/></svg>
        </div>
      </div>
      <div class="over edge"></div><div class="over ledge"></div>
      <div class="over orbat">${officeLogo}</div>
      <div class="over range"><i></i><i></i><i></i><i></i></div>
      <excel-chart class="over chart"></excel-chart>
      <context-menu class="over menu"></context-menu>
      <trend-dialog class="over dlg"></trend-dialog>
      <context-menu class="over menu ghost" ghost></context-menu>
      <svg class="over cursor" width="13" height="21" viewBox="0 0 13 21"><path d="M.7 .8V16.500L4.500 13 7.200 19.500 9.600 18.500 7 12.300H12Z" fill="#fff" stroke="#111"/></svg>
    `;
  }
}
